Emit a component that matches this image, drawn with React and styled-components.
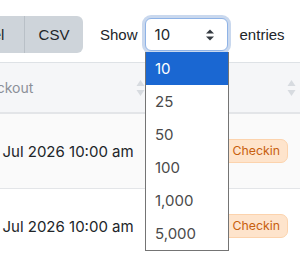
import React from 'react';
import styled, {createGlobalStyle} from 'styled-components';

const GlobalStyle = createGlobalStyle`
  html, body {
    margin: 0;
    padding: 0;
    background: #fff;
    font-family: Inter, "Noto Sans", sans-serif;
    color: #212529;
  }
`;

const Page = styled.div`
  position: relative;
  width: 300px;
  height: 256px;
  overflow: hidden;
`;

const Toolbar = styled.div`
  display: flex;
  align-items: center;
  margin-left: -52px;
  padding-top: 16px;
  height: 37px;
`;

const ButtonGroup = styled.div`
  display: flex;
  height: 37px;
`;

const ExportButton = styled.div`
  display: flex;
  align-items: center;
  justify-content: center;
  width: ${({width}) => width}px;
  background: #ced4da;
  color: #212529;
  font-family: "Liberation Sans", Arial, sans-serif;
  font-size: 15px;
  border-left: ${({first}) => (first ? '0' : '1px solid #b9c0c7')};
  border-radius: ${({first}) => (first ? '6px 0 0 6px' : '0 6px 6px 0')};
`;

const LengthControl = styled.label`
  display: flex;
  align-items: center;
  margin-left: 17px;
  font-family: "Liberation Sans", Arial, sans-serif;
  font-size: 15px;
  color: #212529;
`;

const SelectBox = styled.div`
  display: flex;
  align-items: center;
  justify-content: space-between;
  box-sizing: border-box;
  width: 83px;
  height: 33px;
  margin: 0 12px 0 7px;
  padding: 0 12px 0 9px;
  border: 1px solid #8fb3e6;
  border-radius: 6px;
  box-shadow: 0 0 0 3px #c9d8ee;
  background: #fff;
  font-family: Inter, sans-serif;
  font-size: 15px;
`;

const Table = styled.div`
  margin-top: 9px;
  margin-left: -40px;
  width: 400px;
  border-top: 1px solid #dee2e6;
`;

const Row = styled.div`
  display: grid;
  grid-template-columns: 190px 150px 60px;
  height: ${({head}) => (head ? 49 : 74)}px;
  background: ${({head, striped}) =>
    head ? '#f5f6f8' : striped ? '#fafafa' : '#fff'};
  border-bottom: ${({head}) => (head ? '2px solid #e3e5e8' : '1px solid #e3e5e8')};
`;

const Cell = styled.div`
  display: flex;
  align-items: center;
  justify-content: ${({end}) => (end ? 'flex-end' : 'space-between')};
  padding: 0 5px 0 ${({head}) => (head ? 10 : 23)}px;
  font-size: ${({head}) => (head ? 14 : 15)}px;
  color: ${({head}) => (head ? '#8b9098' : '#212529')};
  white-space: nowrap;

  &:nth-child(2) {
    padding-right: 4px;
  }
`;

const SortIcon = styled.svg`
  width: 9px;
  height: 18px;
  flex-shrink: 0;
`;

const Badge = styled.span`
  display: inline-block;
  margin-right: 8px;
  padding: 3px 7px 4px;
  border: 1px solid #fcd3ad;
  border-radius: 7px;
  background: #fee4cc;
  color: #c8600e;
  font-size: 12.3px;
`;

const Dropdown = styled.ul`
  position: absolute;
  left: 145px;
  top: 52px;
  width: 82px;
  margin: 0;
  padding: 0;
  list-style: none;
  background: #fff;
  border: 1px solid #747474;
  border-top: 0;
`;

const Option = styled.li`
  height: 33px;
  display: flex;
  align-items: center;
  padding-left: 9px;
  font-size: 15px;
  background: ${({selected}) => (selected ? '#1a67d2' : '#fff')};
  color: ${({selected}) => (selected ? '#fff' : '#4a4a4a')};
`;

function Sort() {
  return (
    <SortIcon viewBox="0 0 9 18">
      <path d="M4.5 1 L8.5 7 L0.5 7 Z" fill="#d7dbe0" />
      <path d="M4.5 17 L8.5 11 L0.5 11 Z" fill="#d7dbe0" />
    </SortIcon>
  );
}

function Updown() {
  return (
    <svg width="10" height="14" viewBox="0 0 10 14">
      <path d="M1 5.5 L5 1.5 L9 5.5 Z" fill="#343a40" />
      <path d="M1 8.5 L5 12.5 L9 8.5 Z" fill="#343a40" />
    </svg>
  );
}

const rows = [
  {date: '12 Jul 2026 10:00 am', status: 'Pending Checkin'},
  {date: '12 Jul 2026 10:00 am', status: 'Pending Checkin'},
];

const lengths = ['10', '25', '50', '100', '1,000', '5,000'];

export default function App() {
  return (
    <Page>
      <GlobalStyle />
      <Toolbar>
        <ButtonGroup>
          <ExportButton first width={76}>Excel</ExportButton>
          <ExportButton width={58}>CSV</ExportButton>
        </ButtonGroup>
        <LengthControl>
          Show
          <SelectBox>
            <span>10</span>
            <Updown />
          </SelectBox>
          entries
        </LengthControl>
      </Toolbar>
      <Table>
        <Row head>
          <Cell head>
            Checkout
            <Sort />
          </Cell>
          <Cell head end>
            <Sort />
          </Cell>
          <Cell head />
        </Row>
        {rows.map((row, idx) => (
          <Row key={idx} striped={idx === 0}>
            <Cell>{row.date}</Cell>
            <Cell end>
              <Badge>{row.status}</Badge>
            </Cell>
            <Cell />
          </Row>
        ))}
      </Table>
      <Dropdown>
        {lengths.map(len => (
          <Option key={len} selected={len === '10'}>
            {len}
          </Option>
        ))}
      </Dropdown>
    </Page>
  );
}
